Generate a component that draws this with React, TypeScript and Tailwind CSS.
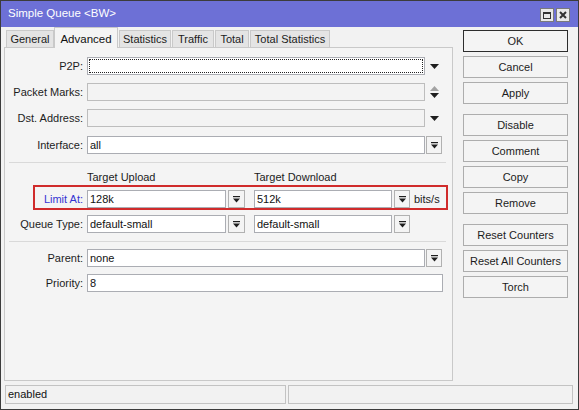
import React from "react";

const font = "font-['Liberation_Sans',Arial,sans-serif]";

function DownArrow() {
    return (
        <svg width="9" height="5" viewBox="0 0 9 5">
            <polygon points="0,0 9,0 4.5,5" fill="#1e1e1e" />
        </svg>
    );
}

function UpDownArrow() {
    return (
        <svg width="9" height="12" viewBox="0 0 9 12">
            <polygon points="0,5 9,5 4.5,0" fill="#a3a3a3" />
            <polygon points="0,7 9,7 4.5,12" fill="#1e1e1e" />
        </svg>
    );
}

function DropBtn({ w }: { w: string }) {
    return (
        <div className={`${w} h-[18px] shrink-0 border border-[#b1b1b1] bg-[#f4f4f4] flex items-center justify-center`}>
            <svg width="7" height="7" viewBox="0 0 7 7">
                <rect x="0" y="0" width="7" height="1.2" fill="#1e1e1e" />
                <polygon points="0,2.5 7,2.5 3.5,6.5" fill="#1e1e1e" />
            </svg>
        </div>
    );
}

function Field({ w, value, disabled, focus }: { w: string; value?: string; disabled?: boolean; focus?: boolean }) {
    return (
        <div
            className={`${w} h-[18px] shrink-0 border ${disabled ? "border-[#bdbdbd] bg-[#f3f3f3]" : "border-[#abadb3] bg-white"} ${focus ? "p-px" : ""} flex items-center`}
        >
            {focus ? (
                <div className="h-full w-full border border-dotted border-[#222]" />
            ) : (
                <span className="pl-[2px] text-[#111]">{value}</span>
            )}
        </div>
    );
}

function Label({ children, blue }: { children: React.ReactNode; blue?: boolean }) {
    return (
        <div className={`w-[78px] shrink-0 text-right ${blue ? "text-[#3434d2]" : "text-[#1c1c1c]"}`}>{children}</div>
    );
}

function Tab({ label, w, active }: { label: string; w: string; active?: boolean }) {
    if (active) {
        return (
            <div className={`${w} h-[21px] -mb-px relative z-10 border border-b-0 border-[#c9c9c9] bg-[#f4f4f4] flex items-start justify-center pt-[3px] text-[11.5px] text-[#111]`}>
                {label}
            </div>
        );
    }
    return (
        <div className={`${w} h-[17px] ml-px border border-b-0 border-[#c9c9c9] bg-[#e4e4e4] flex items-center justify-center pt-px text-[#1c1c1c]`}>
            {label}
        </div>
    );
}

function SideButton({ label, focus }: { label: string; focus?: boolean }) {
    return (
        <div
            className={`h-[22px] w-[105px] border ${focus ? "border-[#2d2d2d]" : "border-[#adadad]"} bg-[#f4f4f4] flex items-center justify-center text-[#1c1c1c]`}
        >
            {label}
        </div>
    );
}

export default function App() {
    return (
        <div className={`${font} text-[11px] w-[579px] h-[410px] border border-[#3c3c3c] bg-[#f2f2f2] flex flex-col overflow-hidden`}>
            {/* Title bar */}
            <div className="h-[26px] shrink-0 bg-[#6d70d6] flex items-center pl-[7px] pr-[8px]">
                <span className="text-white text-[11.5px]">Simple Queue &lt;BW&gt;</span>
                <div className="ml-auto flex gap-[2px] mt-[2px]">
                    <div className="w-[14px] h-[14px] bg-[#e9e9e9] border border-[#7a7a7a] flex items-center justify-center">
                        <div className="w-[8px] h-[7px] border border-t-2 border-[#333]" />
                    </div>
                    <div className="w-[14px] h-[14px] bg-[#e9e9e9] border border-[#7a7a7a] flex items-center justify-center">
                        <svg width="8" height="8" viewBox="0 0 8 8">
                            <path d="M1 1 L7 7 M7 1 L1 7" stroke="#333" strokeWidth="2" />
                        </svg>
                    </div>
                </div>
            </div>

            <div className="flex flex-1 min-h-0">
                {/* Left: tabs + panel */}
                <div className="ml-[3px] w-[449px] flex flex-col">
                    <div className="flex items-end h-[20px] pl-px">
                        <Tab label="General" w="w-[48px]" />
                        <Tab label="Advanced" w="w-[64px]" active />
                        <Tab label="Statistics" w="w-[52px]" />
                        <Tab label="Traffic" w="w-[42px]" />
                        <Tab label="Total" w="w-[34px]" />
                        <Tab label="Total Statistics" w="w-[80px]" />
                    </div>
                    <div className="relative h-[334px] border border-[#c9c9c9] bg-[#f4f4f4] pt-[9px] flex flex-col">
                        <div className="flex flex-col gap-[8px]">
                            <div className="flex items-center">
                                <Label>P2P:</Label>
                                <div className="ml-[4px]"><Field w="w-[338px]" focus /></div>
                                <div className="w-[18px] flex justify-center"><DownArrow /></div>
                            </div>
                            <div className="flex items-center">
                                <Label>Packet Marks:</Label>
                                <div className="ml-[4px]"><Field w="w-[338px]" disabled /></div>
                                <div className="w-[18px] flex justify-center"><UpDownArrow /></div>
                            </div>
                            <div className="flex items-center">
                                <Label>Dst. Address:</Label>
                                <div className="ml-[4px]"><Field w="w-[338px]" disabled /></div>
                                <div className="w-[18px] flex justify-center"><DownArrow /></div>
                            </div>
                            <div className="flex items-center mt-px">
                                <Label>Interface:</Label>
                                <div className="ml-[4px]"><Field w="w-[338px]" value="all" /></div>
                                <div className="ml-px"><DropBtn w="w-[16px]" /></div>
                            </div>
                        </div>

                        <div className="mt-[8px] ml-[4px] w-[437px] h-px bg-[#d9d9d9]" />

                        <div className="mt-[7px] h-[14px] flex items-center text-[#1c1c1c]">
                            <div className="w-[82px]" />
                            <div className="w-[167px]">Target Upload</div>
                            <div>Target Download</div>
                        </div>

                        <div className="mt-[6px] flex flex-col gap-[7px]">
                            <div className="flex items-center">
                                <Label blue>Limit At:</Label>
                                <div className="ml-[4px]"><Field w="w-[139px]" value="128k" /></div>
                                <div className="ml-[2px]"><DropBtn w="w-[17px]" /></div>
                                <div className="ml-[9px]"><Field w="w-[138px]" value="512k" /></div>
                                <div className="ml-[2px]"><DropBtn w="w-[16px]" /></div>
                                <span className="ml-[4px] text-[#1c1c1c]">bits/s</span>
                            </div>
                            <div className="flex items-center">
                                <Label>Queue Type:</Label>
                                <div className="ml-[4px]"><Field w="w-[139px]" value="default-small" /></div>
                                <div className="ml-[2px]"><DropBtn w="w-[17px]" /></div>
                                <div className="ml-[9px]"><Field w="w-[138px]" value="default-small" /></div>
                                <div className="ml-[2px]"><DropBtn w="w-[16px]" /></div>
                            </div>
                        </div>

                        <div className="mt-[8px] ml-[4px] w-[437px] h-px bg-[#d9d9d9]" />

                        <div className="mt-[7px] flex flex-col gap-[7px]">
                            <div className="flex items-center">
                                <Label>Parent:</Label>
                                <div className="ml-[4px]"><Field w="w-[338px]" value="none" /></div>
                                <div className="ml-px"><DropBtn w="w-[16px]" /></div>
                            </div>
                            <div className="flex items-center">
                                <Label>Priority:</Label>
                                <div className="ml-[4px]"><Field w="w-[356px]" value="8" /></div>
                            </div>
                        </div>

                        {/* highlight annotation */}
                        <div className="absolute left-[28px] top-[137px] w-[415px] h-[25px] border-2 border-[#d02b2b] pointer-events-none" />
                    </div>
                </div>

                {/* Right: buttons */}
                <div className="ml-[10px] mt-[3px] flex flex-col">
                    <div className="flex flex-col gap-[4px]">
                        <SideButton label="OK" focus />
                        <SideButton label="Cancel" />
                        <SideButton label="Apply" />
                    </div>
                    <div className="mt-[10px] flex flex-col gap-[4px]">
                        <SideButton label="Disable" />
                        <SideButton label="Comment" />
                        <SideButton label="Copy" />
                        <SideButton label="Remove" />
                    </div>
                    <div className="mt-[10px] flex flex-col gap-[4px]">
                        <SideButton label="Reset Counters" />
                        <SideButton label="Reset All Counters" />
                        <SideButton label="Torch" />
                    </div>
                </div>
            </div>

            {/* Status bar */}
            <div className="h-[24px] shrink-0 flex pl-[4px] pr-[5px] pt-0 pb-[5px] gap-[2px]">
                <div className="w-[281px] border border-[#c3c3c3] flex items-center pl-[2px] text-[#111]">enabled</div>
                <div className="flex-1 border border-[#c3c3c3]" />
            </div>
        </div>
    );
}
